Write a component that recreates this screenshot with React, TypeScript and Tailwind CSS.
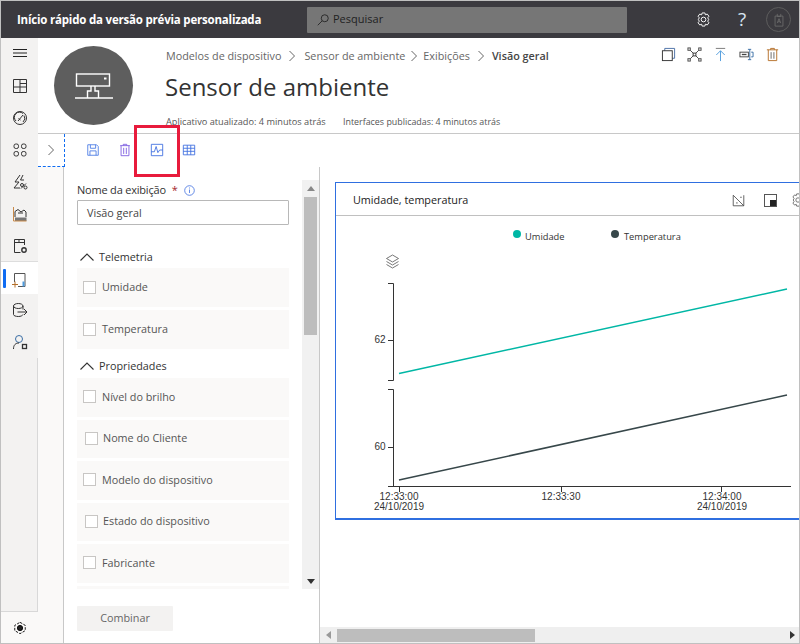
import React from "react";

const font = { fontFamily: '"Open Sans", "Noto Sans", sans-serif' };

function Icon({ size = 16, className = "", children }: { size?: number; className?: string; children: React.ReactNode }) {
  return (
    <svg width={size} height={size} viewBox="0 0 16 16" fill="none" stroke="currentColor" strokeWidth="1" className={className}>
      {children}
    </svg>
  );
}

function Chevron() {
  return (
    <svg width="8" height="12" viewBox="0 0 8 12" fill="none" stroke="#666" strokeWidth="1">
      <path d="M1.500 1 L6.500 6 L1.500 11" />
    </svg>
  );
}

function Up() {
  return (
    <svg width="14" height="8" viewBox="0 0 14 8" fill="none" stroke="#333" strokeWidth="1.100">
      <path d="M0.500 7.500 L7 1 L13.500 7.500" />
    </svg>
  );
}

const gearPath = "M6.500 1h3l.5 2 2-.8 1.800 2.300-1.300 1.700 1 1.800-1 1.800 1.300 1.700-1.800 2.300-2-.8-.5 2h-3l-.5-2-2 .8L2.200 11.500l1.300-1.700-1-1.800 1-1.800-1.300-1.700L4 2.200l2 .8z";

const railIcons: React.ReactNode[] = [
  <path key="a" d="M1.500 1.500h13v13h-13zM1.500 9h13M8 1.500V14.500M8 5.500h6.500" />,
  <g key="b"><circle cx="8" cy="8" r="6.500" /><path d="M4 11 A5 5 0 0 1 11 3.500M12 5.500A5 5 0 0 1 11 12M6 11l5-6M6.500 8.500l2 1.500" /></g>,
  <g key="c"><rect x="2" y="2" width="4.500" height="4.500" rx="1.800" /><rect x="9.500" y="2" width="4.500" height="4.500" rx="1.800" /><rect x="2" y="9.500" width="4.500" height="4.500" rx="1.800" /><rect x="9.500" y="9.500" width="4.500" height="4.500" rx="1.800" /></g>,
  <g key="d"><path d="M8 1 L3 8 H7 L2 14 H8M11 1 L8.500 6 H12" /><circle cx="10" cy="11" r="1.500" /><circle cx="13.500" cy="13.500" r="1.500" /><path d="M14 9.500l-5 5" /></g>,
  <g key="e"><path d="M3 11V5.500l3-2 3 2.500 3-2 2 2V11" /><path d="M6 7h5" /><path d="M3 11.500h11.500V15H3z" fill="#777" stroke="none" /><path d="M1.500 1v14h13" stroke="#c98a4a" /></g>,
  <g key="f"><path d="M12.500 7V1.500h-10v13h6M2.500 4.500h10M7 1.500v3" /><circle cx="12" cy="12" r="2.200" strokeWidth="1.400" /></g>,
];

function RailIcon({ children }: { children: React.ReactNode }) {
  return <div className="h-[32px] flex items-center justify-center text-[#333]"><Icon>{children}</Icon></div>;
}

function Check({ label, shift, tight }: { label: string; shift?: boolean; tight?: boolean }) {
  return (
    <div className={`${tight ? "h-[38.5px]" : "h-[39px]"} mb-[3px] bg-[#faf9f8] flex items-center pl-[6px]`}>
      <div className={`w-[13px] h-[13px] border border-[#c8c6c4] bg-white mb-[1px] ${shift ? "ml-[2px] mr-[5px]" : "mr-[6px]"}`} />
      <span className="text-[10.8px] text-[#555] mb-[1px]">{label}</span>
    </div>
  );
}

function Crumb({ text, bold }: { text: string; bold?: boolean }) {
  return <span className={`text-[10.8px] ${bold ? "font-semibold text-[#444]" : "text-[#666]"}`}>{text}</span>;
}

function Chart() {
  return (
    <svg width="463" height="303" viewBox="336 216 463 303" className="block" style={{ fontFamily: '"Liberation Sans", sans-serif' }}>
      <circle cx="517" cy="234" r="4" fill="#00b7a5" />
      <text x="525" y="240" fontSize="9.300" fontFamily="Open Sans" fill="#333">Umidade</text>
      <circle cx="615" cy="234" r="4" fill="#37474a" />
      <text x="624" y="240" fontSize="9.300" fontFamily="Open Sans" fill="#333">Temperatura</text>
      <g fill="none" stroke="#555" strokeWidth="0.800">
        <path d="M386.500 258.500 l6 -3.500 l6 3.500 l-6 3.500z" />
        <path d="M386.500 261.500 l6 3.500 l6 -3.500M386.500 264.500 l6 3.500 l6 -3.500" />
      </g>
      <g fill="none" stroke="#333" strokeWidth="1">
        <path d="M388 283.500h5.500v97H388M388 340.500h5.500" />
        <path d="M388 389.500h5.500v97H388M388 447.500h5.500" />
        <path d="M388 486.500H791M399.500 487v5M561.500 487v5M721.500 487v5" />
      </g>
      <path d="M399 373.500 L787 289" stroke="#00b7a5" strokeWidth="1.500" />
      <path d="M399 480 L787 395" stroke="#37474a" strokeWidth="1.500" />
      <g fontSize="10" fill="#333" textAnchor="middle">
        <text x="380" y="342.500">62</text>
        <text x="380" y="450">60</text>
        <text x="399" y="500">12:33:00</text>
        <text x="399" y="510">24/10/2019</text>
        <text x="561" y="500">12:33:30</text>
        <text x="722" y="500">12:34:00</text>
        <text x="722" y="510">24/10/2019</text>
      </g>
    </svg>
  );
}

export default function App() {
  const headerIcons: React.ReactNode[] = [
    <g key="copy"><path d="M4 4V1.500h10.500V12H12" stroke="#4a6fa5" /><rect x="1.500" y="4" width="10.500" height="10.500" stroke="#333" /></g>,
    <g key="net" stroke="#444"><rect x="1" y="1" width="2.500" height="2.500" /><rect x="12.500" y="1" width="2.500" height="2.500" /><rect x="1" y="12.500" width="2.500" height="2.500" /><rect x="12.500" y="12.500" width="2.500" height="2.500" /><rect x="6.500" y="6.500" width="3" height="3" stroke="#333" /><path d="M3.500 3.500l3 3M12.500 3.500l-3 3M3.500 12.500l3-3M12.500 12.500l-3-3" /></g>,
    <g key="pub"><path d="M3 1.500h10" stroke="#777" /><path d="M8 15V4M3.500 8.500 8 4l4.500 4.500" stroke="#4f9bdc" /></g>,
    <g key="tag" stroke="#444"><rect x="1" y="5.500" width="9" height="5" /><path d="M3 8h5" strokeWidth="1.400" /><path d="M9.500 2.500h3.500M9.500 13.500h3.500M11.500 2.500v11M13 5.500h2v5h-2" stroke="#3a6ea5" /></g>,
    <g key="del" stroke="#b5702a"><path d="M2 3h12M6 3V1.500h4V3M3.500 3v11.500h9V3" /><path d="M6.500 5.500v7M9.500 5.500v7" stroke="#666" /></g>,
  ];

  return (
    <div className="relative w-[800px] h-[644px] overflow-hidden border border-[#c0c0c0] flex flex-col bg-white" style={font}>
      {/* top bar */}
      <div className="h-[37px] bg-[#3b3a3f] flex items-center shrink-0">
        <div className="w-[306px] pl-[16px] text-white text-[11.5px] font-bold tracking-[-0.2px]">Início rápido da versão prévia personalizada</div>
        <div className="w-[320px] h-[26px] bg-[#767676] rounded-[1px] flex items-center pl-[9px] gap-[3px] text-[#222]">
          <Icon size={14}><circle cx="10" cy="6" r="4" /><path d="M7 9 L2 14" /></Icon>
          <span className="text-[11px]">Pesquisar</span>
        </div>
        <div className="ml-[69px] text-white"><Icon size={15}><circle cx="8" cy="8" r="2.500" /><path d={gearPath} /></Icon></div>
        <div className="ml-[25px] text-[#d8e4f0] text-[19px] leading-none w-[12px] text-center">?</div>
        <div className="ml-[18px] w-[25px] h-[25px] rounded-full border border-[#5d5d5d] flex items-center justify-center text-[#6a6a6a]">
          <Icon size={14}><path d="M3.500 3.500h9V15h-9zM6 1v3h4V1" /><path d="M6 11.500 8 6.500l2 5M6.800 10h2.400" /></Icon>
        </div>
      </div>

      <div className="flex flex-1 min-h-0">
        {/* rail */}
        <div className="w-[37px] shrink-0 bg-[#f3f2f1] flex flex-col">
          <div className="h-[30px] flex items-center justify-center">
            <svg width="14" height="10" viewBox="0 0 14 10" stroke="#222"><path d="M0 1.500h14M0 5h14M0 8.500h14" /></svg>
          </div>
          <div className="pt-[2px]">
            {railIcons.map((ic, i) => <RailIcon key={i}>{ic}</RailIcon>)}
          </div>
          <div className="h-[33px] bg-white border-t border-[#ddd] flex items-center pl-[2px] -mt-[1px]">
            <div className="w-[3px] h-[19px] bg-[#0f6cf2] rounded-[1px]" />
            <div className="ml-[5px] text-[#333] pt-[3px]">
              <Icon><path d="M3.500 10V1.500h10.500v13H7" stroke="#555" /><path d="M12.500 9.500v5" stroke="#4f9bdc" strokeWidth="2" /><path d="M1 12.500h6M4 9.500v6" stroke="#b5702a" /></Icon>
            </div>
          </div>
          <RailIcon><path d="M1.500 4c0-1.500 2.300-2.500 4.800-2.500S11 2.500 11 4s-2.200 2.500-4.700 2.500S1.500 5.500 1.500 4v8.500c0 1.200 2.300 2 4.800 2s4.200-.8 4.700-2M11 4v3.500M5.500 10H15M12 7l3 3-3 3" /></RailIcon>
          <RailIcon><circle cx="7" cy="5" r="3.500" stroke="#3a6ea5" /><path d="M1.500 15c0-4 2-6 5.500-6" /><rect x="10.500" y="10.500" width="4" height="4" strokeWidth="1.300" /></RailIcon>
          <div className="flex-1 border-r border-[#d8d8d8]" />
          <div className="h-[32px] border-t border-[#d8d8d8] bg-[#faf9f8] flex items-center justify-center">
            <Icon size={14}><path d="M8 1.500 14 5v6l-6 3.500L2 11V5z" strokeDasharray="3 1.500" /><circle cx="8" cy="8" r="3" fill="#222" /></Icon>
          </div>
        </div>

        <div className="flex-1 min-w-0 flex flex-col">
          {/* page header */}
          <div className="h-[96px] shrink-0 border-b border-[#c8c8c8] flex">
            <div className="w-[127px] pl-[16px] pt-[8px]">
              <div className="w-[79px] h-[79px] rounded-full bg-[#5e5e5e] flex items-center justify-center">
                <svg width="38" height="28" viewBox="0 0 38 28" fill="none" stroke="white" strokeWidth="1.400" className="mt-[3px]">
                  <rect x="1.500" y="1" width="33" height="12" />
                  <path d="M29 5.500h2.500" strokeWidth="2" />
                  <path d="M16 13v5h-3.500v7M20 13v5h3.500v7" />
                  <path d="M0 25h38" />
                </svg>
              </div>
            </div>
            <div className="flex-1 relative">
              <div className="flex items-center h-[18px] mt-[9px] pl-px">
                <Crumb text="Modelos de dispositivo" />
                <span className="mx-[7px]"><Chevron /></span>
                <span className="ml-px" />
                <Crumb text="Sensor de ambiente" />
                <span className="mx-[5px]"><Chevron /></span>
                <Crumb text="Exibições" />
                <span className="mx-[7px]"><Chevron /></span>
                <Crumb text="Visão geral" bold />
              </div>
              <div className="text-[24px] leading-[34px] mt-[5px] text-[#333]">Sensor de ambiente</div>
              <div className="flex text-[9.2px] text-[#555] mt-[11px] pl-px">
                <span className="w-[177px]">Aplicativo atualizado: 4 minutos atrás</span>
                <span className="text-[8.9px]">Interfaces publicadas: 4 minutos atrás</span>
              </div>
              <div className="absolute top-[9px] right-[19px] flex gap-[11px]">
                {headerIcons.map((ic, i) => <Icon key={i} size={15}>{ic}</Icon>)}
              </div>
            </div>
          </div>

          {/* toolbar */}
          <div className="h-[33px] shrink-0 flex">
            <div className="w-[27px] flex items-center justify-center border-r border-b border-dashed border-[#0f6cf2] bg-white"><Chevron /></div>
            <div className="flex items-center pl-[21px] gap-[18px] pb-[1px]">
              <Icon size={14} className="text-[#4b7be5]"><path d="M2 2h10l2 2v10H2zM5 2v4h6V2M4.500 14V9h7v5" /></Icon>
              <Icon size={14} className="text-[#7b5be0]"><path d="M2.500 3h11M6 3V1.500h4V3M3.500 3v11.500h9V3M6.500 5.500v7M9.500 5.500v7" /></Icon>
              <Icon size={14} className="text-[#3f6fe0]"><path d="M1.500 1.500h13v13h-13zM1.500 10h3.500l2-6 2 7 2-3h3.500" /></Icon>
              <Icon size={14} className="text-[#3f6fe0]"><path d="M1.500 2.500h13v11h-13zM1.500 6h13M1.500 9.500h13M6 2.500v11M10 2.500v11" /></Icon>
            </div>
          </div>

          {/* editor */}
          <div className="flex-1 min-h-0 flex">
            <div className="w-[25px] shrink-0 bg-[#faf9f8]" />
            <div className="w-[257px] shrink-0 border-l border-r border-[#c8c8c8] flex flex-col">
              <div className="flex h-[409px] mt-[13px]">
                <div className="w-[238px] pl-[13px] overflow-hidden">
                  <div className="flex items-center h-[18px] text-[11px] tracking-[-0.2px] text-[#333] mt-[1px] mb-[1px]">
                    Nome da exibição <span className="text-[#a4262c] ml-[6px] mr-[6px]">*</span>
                    <svg width="11" height="11" viewBox="0 0 11 11" fill="none" stroke="#3f6fe0" strokeWidth="0.800"><circle cx="5.500" cy="5.500" r="4.800" /><path d="M5.500 4.500v3.500M5.500 2.500v1" /></svg>
                  </div>
                  <div className="w-[212px] h-[25px] border border-[#b8b8b8] rounded-[1px] flex items-center pl-[9px] pt-[2px] text-[10.8px] text-[#444]">Visão geral</div>
                  <div className="flex items-center h-[18px] mt-[23px] mb-[2px] pl-[3px] gap-[5px] text-[10.8px] text-[#333]"><Up /> Telemetria</div>
                  <div className="w-[212px]">
                    <Check label="Umidade" />
                    <Check label="Temperatura" />
                  </div>
                  <div className="flex items-center h-[18px] mt-[8px] mb-[3px] pl-[3px] gap-[5px] text-[10.8px] text-[#333]"><Up /> Propriedades</div>
                  <div className="w-[212px]">
                    <Check tight label="Nível do brilho" />
                    <Check tight label="Nome do Cliente" shift />
                    <Check tight label="Modelo do dispositivo" />
                    <Check tight label="Estado do dispositivo" shift />
                    <Check tight label="Fabricante" />
                    <div className="h-[39px] bg-[#faf9f8]" />
                  </div>
                </div>
                <div className="w-[17px] bg-[#f1f1f1] flex flex-col items-center">
                  <div className="h-[17px] flex items-center justify-center"><svg width="8" height="5" viewBox="0 0 8 5"><path d="M4 0 L8 5H0z" fill="#888" /></svg></div>
                  <div className="w-[13px] h-[138px] bg-[#bdbdbd]" />
                  <div className="flex-1" />
                  <div className="h-[16px] flex items-center justify-center"><svg width="8" height="5" viewBox="0 0 8 5"><path d="M0 0H8L4 5z" fill="#333" /></svg></div>
                </div>
              </div>
              <div className="ml-[13px] mt-[17px] w-[96px] h-[25px] bg-[#f3f2f1] rounded-[1px] flex items-center justify-center text-[10.8px] text-[#666]">Combinar</div>
            </div>

            {/* canvas */}
            <div className="flex-1 min-w-0 flex flex-col">
              <div className="flex-1 min-h-0 pl-[15px] pt-[15px] overflow-hidden">
                <div className="w-[480px] h-[338px] border border-[#2f6fe0] border-b-2">
                  <div className="h-[33px] border-b border-[#c0c0c0] flex items-center pl-[17px] pt-[2px] text-[10.8px] text-[#222]">
                    <span className="w-[379px]">Umidade, temperatura</span>
                    <Icon size={13} className="text-[#444]"><path d="M1.500 1.500 14.500 14.500H1.500zM14.500 1.500v13M5 11h2M10 4h2" /></Icon>
                    <div className="ml-[19px] w-[13px] h-[13px] border border-[#555] flex items-end justify-end"><div className="w-[6px] h-[6px] bg-[#222]" /></div>
                    <div className="ml-[14px] text-[#666]"><Icon size={14}><circle cx="8" cy="8" r="2.500" /><path d={gearPath} /></Icon></div>
                  </div>
                  <Chart />
                </div>
              </div>
              <div className="h-[16px] shrink-0 bg-[#efefef] flex items-center">
                <div className="w-[17px] flex justify-center"><svg width="5" height="8" viewBox="0 0 5 8"><path d="M5 0V8L0 4z" fill="#999" /></svg></div>
                <div className="w-[198px] h-[13px] bg-[#bdbdbd]" />
                <div className="flex-1" />
                <div className="w-[14px] flex justify-center"><svg width="5" height="8" viewBox="0 0 5 8"><path d="M0 0V8L5 4z" fill="#333" /></svg></div>
              </div>
            </div>
          </div>
        </div>
      </div>

      {/* red highlight from the docs screenshot */}
      <div className="absolute left-[133px] top-[124px] w-[46px] h-[52px] border-[3px] border-[#e81b3c]" />
    </div>
  );
}
